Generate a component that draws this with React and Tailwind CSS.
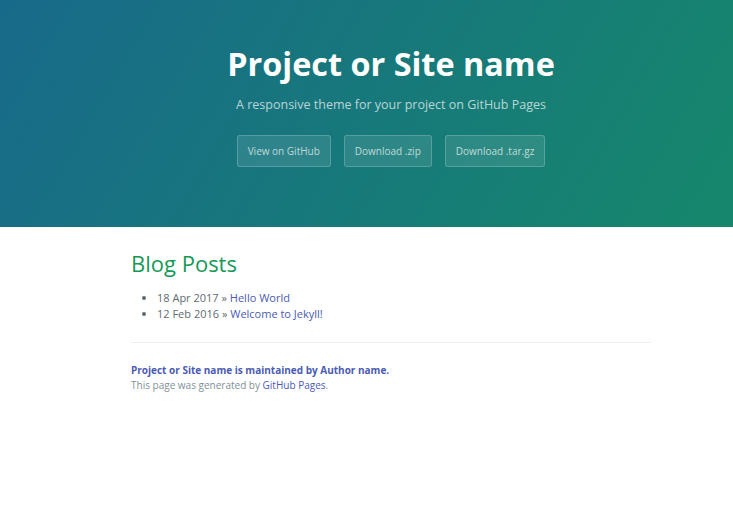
import React from 'react'

const posts = [
  { date: '18 Apr 2017', title: 'Hello World' },
  { date: '12 Feb 2016', title: 'Welcome to Jekyll!' },
]

const buttons = ['View on GitHub', 'Download .zip', 'Download .tar.gz']

export default function App() {
  return (
    <div className="min-h-[513px] overflow-hidden bg-white font-['Open_Sans',sans-serif]">
      <div className="w-[782px]">
        <section className="flex h-[227px] flex-col items-center bg-[linear-gradient(120deg,#186a8a,#16896a)] pt-[41px] text-center text-white">
          <h1 className="text-[32.4px] font-bold leading-[44px]">Project or Site name</h1>
          <h2 className="mt-[11px] text-[12.5px] leading-[18px] text-white/70">
            A responsive theme for your project on GitHub Pages
          </h2>
          <div className="mt-[21px] flex gap-[13px]">
            {buttons.map((label) => (
              <a
                key={label}
                href="#"
                className="flex h-[32px] items-center rounded-[3px] border border-white/20 bg-white/10 px-[10px] text-[10px] text-white/70"
              >
                {label}
              </a>
            ))}
          </div>
        </section>

        <main className="mx-auto w-[520px] pt-[21px] text-[#606c71]">
          <h2 className="text-[22px] leading-[30px] text-[#159957]">Blog Posts</h2>
          <ul className="mt-[12px] list-disc pl-[26px] text-[11px] leading-[16px] marker:text-[#606c71]">
            {posts.map((post) => (
              <li key={post.title}>
                {post.date} &raquo; <a href="#" className="text-[#4a5bb3]">{post.title}</a>
              </li>
            ))}
          </ul>

          <footer className="mt-[20px] border-t border-[#eff0f1] pt-[20px] text-[10px] leading-[15px]">
            <span className="block font-bold text-[#4a5bb3]">
              Project or Site name is maintained by <a href="#">Author name</a>.
            </span>
            <span className="block text-[#819198]">
              This page was generated by <a href="#" className="text-[#4a5bb3]">GitHub Pages</a>.
            </span>
          </footer>
        </main>
      </div>
    </div>
  )
}
